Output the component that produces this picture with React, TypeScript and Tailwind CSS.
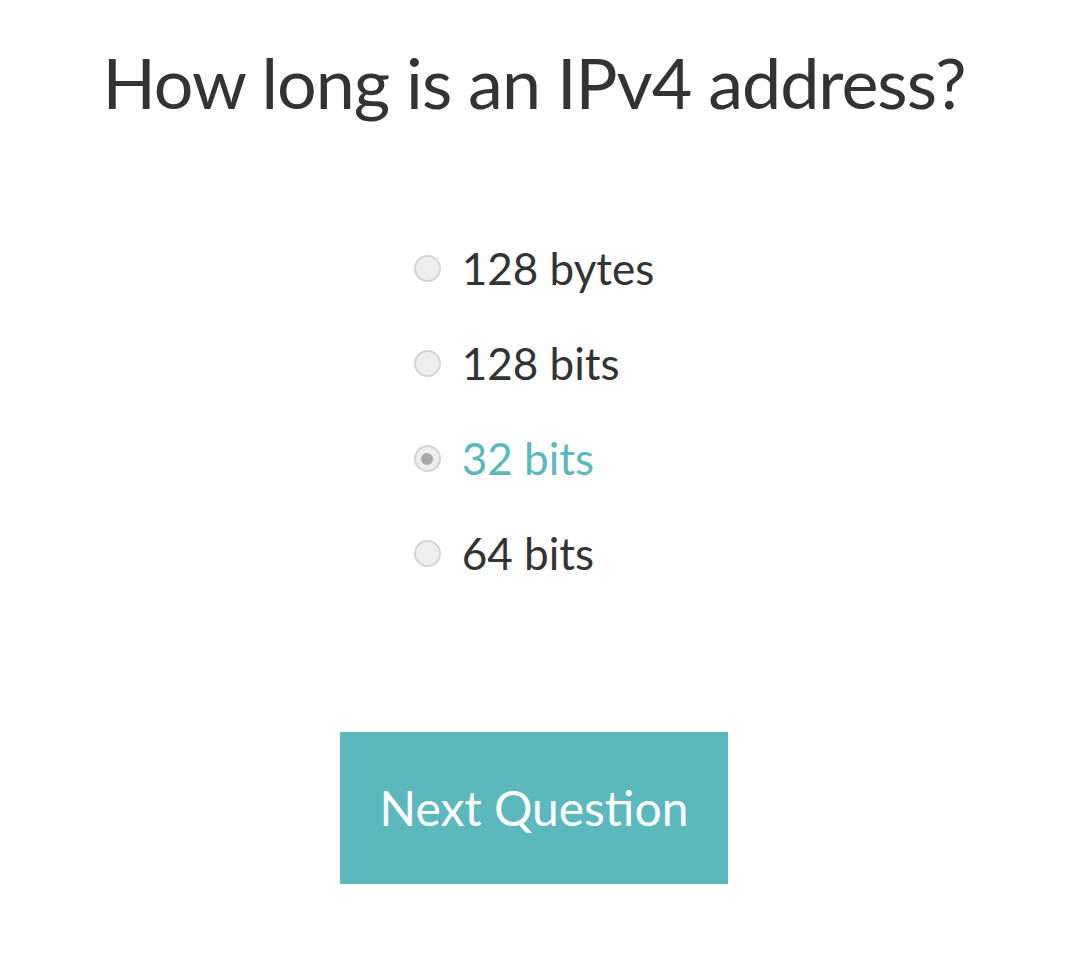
import React from "react";

const options = ["128 bytes", "128 bits", "32 bits", "64 bits"];

export default function App() {
  const selected = 2;
  return (
    <div
      className="w-[1080px] h-[964px] bg-white pr-[12px] flex flex-col items-center"
      style={{ fontFamily: "Lato, 'Open Sans', sans-serif" }}
    >
      <h1 className="mt-[40px] text-[70px] leading-[84px] font-normal text-[#333333] tracking-[-1px]">
        How long is an IPv4 address?
      </h1>
      <div className="mt-[117px] flex flex-col gap-[40px]">
        {options.map((o, i) => (
          <label key={o} className="flex items-center h-[55px] gap-[21px]">
            <span className="w-[27px] h-[27px] rounded-full border-2 border-[#d4d4d4] bg-[#eeeeee] flex items-center justify-center">
              {i === selected && <span className="w-[12px] h-[12px] rounded-full bg-[#a8a8a8]" />}
            </span>
            <span
              className={`text-[44px] leading-[55px] ${
                i === selected ? "text-[#5bb8bc]" : "text-[#333333]"
              }`}
            >
              {o}
            </span>
          </label>
        ))}
      </div>
      <button className="mt-[151px] w-[388px] h-[152px] bg-[#5bb8bc] text-white text-[48px]">
        Next Question
      </button>
    </div>
  );
}
